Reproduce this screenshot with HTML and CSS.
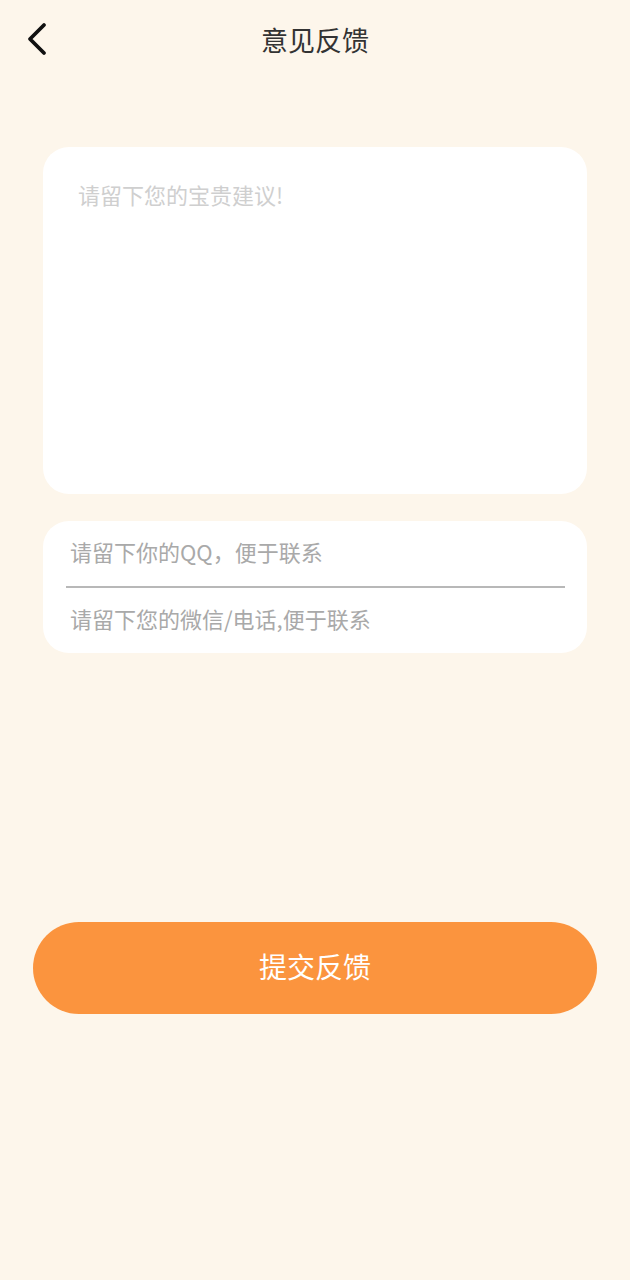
FILE: index.html
```html
<!DOCTYPE html>
<html lang="zh">
<head>
<meta charset="utf-8">
<title>意见反馈</title>
<link rel="stylesheet" href="styles.css">
</head>
<body>
<header class="topbar">
  <div class="back">
    <svg width="24" height="34" viewBox="0 0 24 34"><path d="M19 3 L5 17 L19 31" fill="none" stroke="#111" stroke-width="3.8" stroke-linecap="round" stroke-linejoin="round"/></svg>
  </div>
  <h1 class="title">意见反馈</h1>
  <div></div>
</header>
<main class="content">
  <div class="card suggest">
    <div class="placeholder">请留下您的宝贵建议!</div>
  </div>
  <div class="card contact">
    <div class="field"><span>请留下你的QQ，便于联系</span></div>
    <div class="divider"></div>
    <div class="field"><span>请留下您的微信/电话,便于联系</span></div>
  </div>
  <button class="submit">提交反馈</button>
</main>
</body>
</html>
```
FILE: styles.css
```css
html, body {
  margin: 0;
  padding: 0;
  background: #fdf6eb;
  font-family: "Noto Sans CJK SC", "Noto Sans", sans-serif;
}
.topbar {
  height: 80px;
  display: grid;
  grid-template-columns: 1fr auto 1fr;
  align-items: center;
}
.back {
  padding-left: 25px;
  display: flex;
  align-items: center;
  height: 34px;
  margin-top: -3px;
}
.title {
  margin: 0;
  font-size: 27px;
  font-weight: 400;
  color: #333;
  line-height: 1;
  margin-top: -2px;
}
.content {
  padding: 67px 43px 0;
  display: flex;
  flex-direction: column;
}
.card {
  background: #fff;
  border-radius: 26px;
}
.suggest {
  height: 347px;
  box-sizing: border-box;
  padding: 32px 35px;
}
.placeholder {
  font-size: 22px;
  line-height: 30px;
  color: #cfcfcf;
}
.contact {
  margin-top: 27px;
  height: 132px;
  box-sizing: border-box;
  padding: 0 22px 0 23px;
  display: flex;
  flex-direction: column;
}
.field {
  flex: 1;
  display: flex;
  align-items: center;
  padding-left: 4px;
  padding-bottom: 6px;
  font-size: 22px;
  color: #a9a9a9;
}
.divider {
  height: 2px;
  background: #b8b8b8;
}
.submit {
  margin: 269px -10px 0;
  height: 92px;
  border: none;
  border-radius: 46px;
  background: #fb943e;
  color: #fff;
  font-family: inherit;
  font-size: 28px;
  padding: 0 0 4px;
}
```
